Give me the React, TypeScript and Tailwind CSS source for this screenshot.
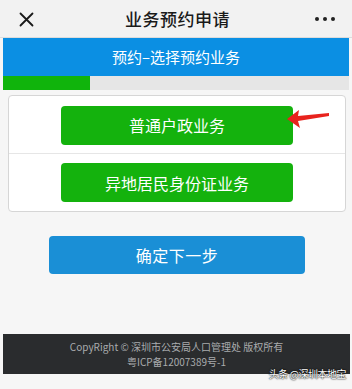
import React from "react";

export default function App() {
  return (
    <div className="relative w-[352px] h-[389px] overflow-hidden bg-[#f6f6f6] font-['Noto_Sans_CJK_SC','Noto_Sans',sans-serif]">
      {/* header */}
      <div className="flex h-[38px] items-center justify-between border-b border-[#dcdcdc] bg-[#f2f2f2] pl-[19px] pr-[14px]">
        <svg width="15" height="15" viewBox="0 0 15 15" className="mt-[1px]">
          <path d="M1.5 1.5 L13.5 13.5 M13.5 1.5 L1.5 13.5" stroke="#1a1a1a" strokeWidth="1.8" strokeLinecap="round" />
        </svg>
        <div className="text-[17px] leading-none font-medium text-[#1a1a1a] tracking-[0.5px] ml-[6px]">业务预约申请</div>
        <div className="flex gap-[4px] pr-[3px]">
          <span className="block h-[4px] w-[4px] rounded-full bg-[#222]" />
          <span className="block h-[4px] w-[4px] rounded-full bg-[#222]" />
          <span className="block h-[4px] w-[4px] rounded-full bg-[#222]" />
        </div>
      </div>

      <div className="px-[3px]">
        {/* blue title bar */}
        <div className="flex h-[38px] items-center justify-center bg-[#0b8fe3] text-[15px] text-white">
          预约–选择预约业务
        </div>
        {/* progress */}
        <div className="h-[14px] bg-[#e6e6e6]">
          <div className="h-full w-[87px] bg-[#10b40c]" />
        </div>

        {/* card */}
        <div className="ml-[5px] mr-[3px] mt-[5px] rounded-[4px] border border-[#d6d6d6] bg-white">
          <div className="flex h-[58px] items-center justify-center border-b border-[#e6e6e6] pt-[1px]">
            <div className="flex h-[39px] w-[232px] items-center justify-center rounded-[4px] bg-[#14b20d] text-[16px] text-white">
              普通户政业务
            </div>
          </div>
          <div className="flex h-[57px] items-center justify-center">
            <div className="flex h-[39px] w-[232px] items-center justify-center rounded-[4px] bg-[#14b20d] text-[16px] text-white">
              异地居民身份证业务
            </div>
          </div>
        </div>

        {/* confirm */}
        <div className="mt-[24px] flex justify-center pl-[2px]">
          <div className="flex h-[38px] w-[256px] items-center justify-center rounded-[4px] bg-[#1a8fd6] text-[16px] text-white tracking-[0.5px]">
            确定下一步
          </div>
        </div>

        {/* footer */}
        <div className="mt-[60px] mr-[-1px] flex h-[40px] flex-col items-center justify-center bg-[#2a2c2e] text-[10px] leading-[15px] text-[#a9abad]">
          <div>CopyRight © 深圳市公安局人口管理处 版权所有</div>
          <div>粤ICP备12007389号-1</div>
        </div>
      </div>

      {/* watermark */}
      <div className="absolute right-[6px] top-[369px] whitespace-nowrap text-[10px] leading-none tracking-[-0.5px] text-white [text-shadow:0_0_2px_#000,0_0_1px_#000]">
        头条 @深圳本地宝
      </div>

      {/* red arrow */}
      <svg className="absolute left-[284px] top-[108px]" width="48" height="22" viewBox="0 0 48 22">
        <path d="M3 11 L15 2 L14 8 L45 5 L45 8 L14 13 L16 20 Z" fill="#e8231d" />
      </svg>
    </div>
  );
}
